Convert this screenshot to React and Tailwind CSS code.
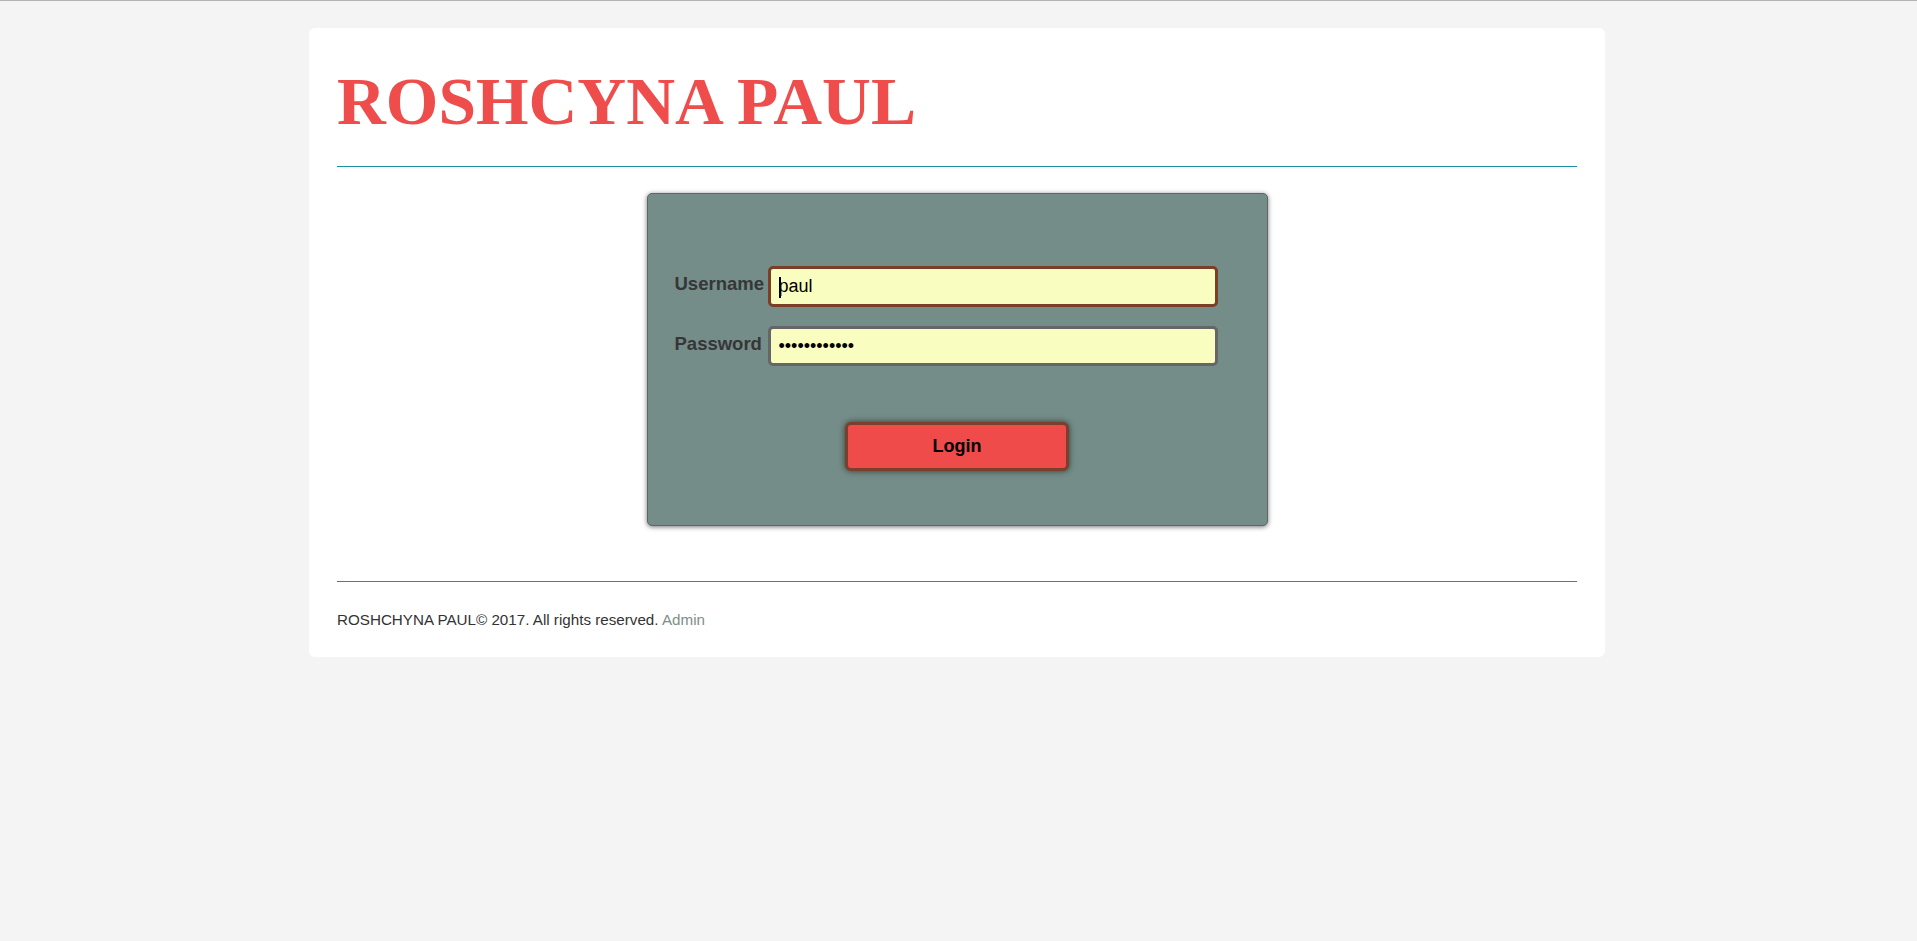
// Página de login: tarjeta blanca centrada con título, panel de acceso y pie.
const sans = { fontFamily: '"Liberation Sans", Arial, sans-serif' };

function Field({ label, children }) {
  return (
    <div className="flex items-start">
      <label className="w-[93px] shrink-0 pt-[6px] text-[18.5px] font-bold leading-[24px] text-[#363636]">
        {label}
      </label>
      {children}
    </div>
  );
}

function LoginPanel() {
  return (
    <div className="mx-auto w-[621px] rounded-[5px] border border-[#5f6664] bg-[#748d89] pt-[72px] pb-[54px] pl-[27px] shadow-[0_1px_5px_rgba(0,0,0,0.55)]">
      <Field label="Username">
        <div className="relative">
          <input
            type="text"
            defaultValue="paul"
            readOnly
            className="h-[41px] w-[450px] rounded-[5px] border-[3px] border-[#7b3f27] bg-[#f9fdbf] pl-[8px] text-[18px] text-black outline-none"
            style={sans}
          />
          {/* cursor de texto */}
          <span className="absolute left-[11px] top-[11px] h-[21px] w-[2px] bg-black" />
        </div>
      </Field>
      <div className="mt-[19px]">
        <Field label="Password">
          <input
            type="password"
            defaultValue="************"
            readOnly
            className="h-[40px] w-[450px] rounded-[5px] border-[3px] border-[#666666] bg-[#f9fdbf] pl-[8px] text-[18px] text-black outline-none"
            style={sans}
          />
        </Field>
      </div>
      <div className="-ml-[27px] mt-[56px] flex justify-center">
        <button className="h-[49px] w-[224px] rounded-[6px] border-[3px] border-[#7a402c] bg-[#ef4b4b] text-[18px] font-bold text-black shadow-[0_0_6px_rgba(0,0,0,0.6)]">
          Login
        </button>
      </div>
    </div>
  );
}

export default function App() {
  return (
    <div className="min-h-[941px] border-t border-[#b3b3b3] bg-[#f4f4f4] pt-[27px]" style={sans}>
      <div className="ml-[309px] w-[1296px] rounded-[6px] bg-white px-[28px] pt-[34px] pb-[27px]">
        <h1
          className="text-[67.6px] font-bold leading-[80px] text-[#ef4c4c]"
          style={{ fontFamily: '"Liberation Serif", "Times New Roman", serif' }}
        >
          ROSHCYNA PAUL
        </h1>
        <div className="mt-[24px] border-t border-[#1b92a1]" />

        <div className="mt-[26px]">
          <LoginPanel />
        </div>

        <div className="mt-[55px] border-t border-[#1b92a1]" />
        <p className="mt-[28px] text-[15.2px] leading-[20px] text-[#333]">
          ROSHCHYNA PAUL© 2017. All rights reserved.{' '}
          <a href="#" className="text-[#7e8e8b]">Admin</a>
        </p>
      </div>
    </div>
  );
}
